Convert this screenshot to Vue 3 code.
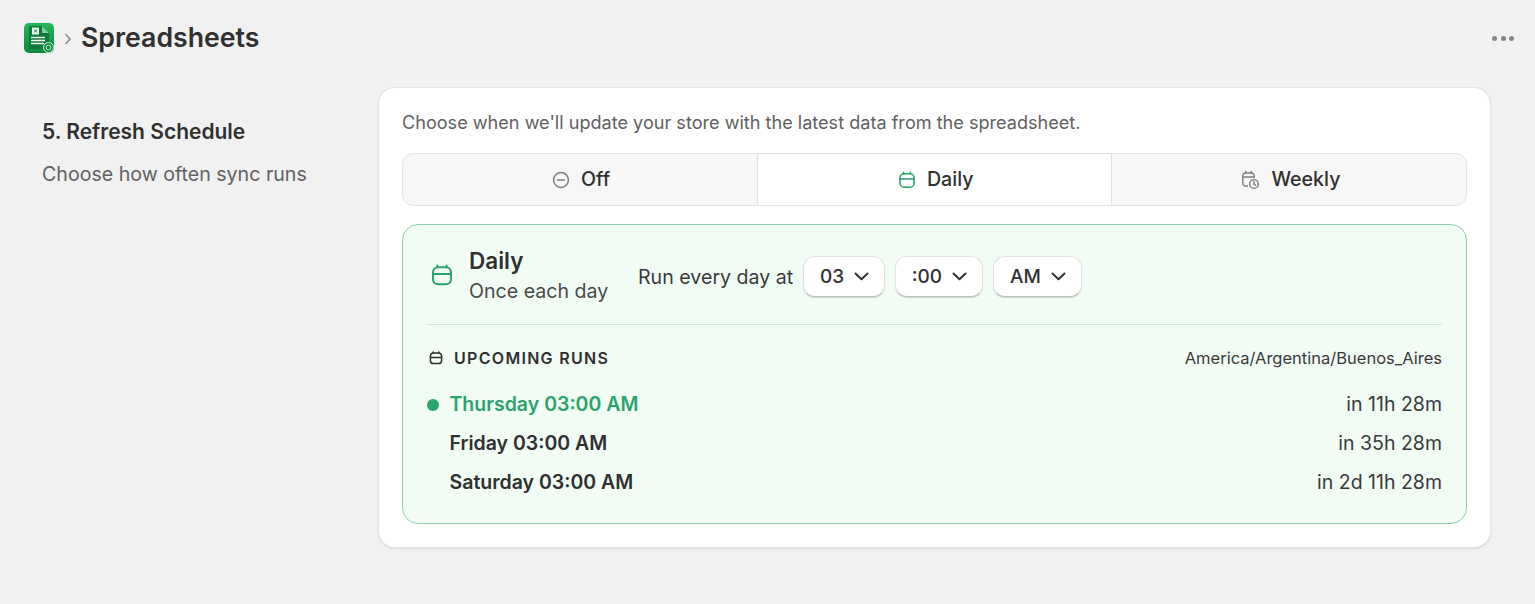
<script setup>
const selects = [
  { label: '03', cls: 's1' },
  { label: ':00', cls: 's2' },
  { label: 'AM', cls: 's3' }
]
const runs = [
  { day: 'Thursday 03:00 AM', left: 'in 11h 28m', next: true },
  { day: 'Friday 03:00 AM', left: 'in 35h 28m', next: false },
  { day: 'Saturday 03:00 AM', left: 'in 2d 11h 28m', next: false }
]
</script>

<template>
  <div class="page">
    <header class="top">
      <svg class="logo" viewBox="0 0 30 30" width="30" height="30">
        <defs>
          <linearGradient id="lg" x1="0" y1="0" x2="0" y2="1">
            <stop offset="0" stop-color="#27b45c"/>
            <stop offset="1" stop-color="#0d8a3e"/>
          </linearGradient>
        </defs>
        <rect width="30" height="30" rx="5" fill="url(#lg)"/>
        <path d="M5 3H18L25 10V26H5Z" fill="#0c7a38"/>
        <path d="M18 3L25 10H18Z" fill="#6fd796"/>
        <rect x="8" y="4.5" width="7" height="7" fill="#eafff1"/>
        <path d="M10 6.5L13 9.5M13 6.5L10 9.5" stroke="#0c7a38" stroke-width="1"/>
        <path d="M7 14.5H21M7 17.5H21M7 20.5H20" stroke="#eafff1" stroke-width="1.5"/>
        <circle cx="24.5" cy="24.5" r="5" fill="#0f8a3c" stroke="#cdeeda" stroke-width="1"/>
        <circle cx="24.5" cy="24.5" r="2.4" fill="none" stroke="#cdeeda" stroke-width="1"/>
      </svg>
      <svg class="crumb" viewBox="0 0 8 14" width="8" height="14">
        <path d="M1.5 2L6 7L1.5 12" fill="none" stroke="#8a8a8a" stroke-width="1.5"/>
      </svg>
      <h1 class="title">Spreadsheets</h1>
      <div class="dots"><i></i><i></i><i></i></div>
    </header>

    <main class="body">
      <aside class="side">
        <h2 class="side-title">5. Refresh Schedule</h2>
        <p class="side-text">Choose how often sync runs</p>
      </aside>

      <section class="card">
        <p class="intro">Choose when we'll update your store with the latest data from the spreadsheet.</p>

        <div class="tabs">
          <div class="tab">
            <svg viewBox="0 0 18 18" width="18" height="18" fill="none" stroke="#7d7d7d" stroke-width="1.5">
              <circle cx="9" cy="9" r="7.4"/>
              <path d="M5.6 9H12.4" stroke-linecap="round"/>
            </svg>
            <span>Off</span>
          </div>
          <div class="tab active">
            <svg viewBox="0 0 18 18" width="18" height="18" fill="none" stroke="#2ba36c" stroke-width="1.6">
              <rect x="2" y="2.8" width="14" height="13.4" rx="4"/>
              <path d="M2 8H16M5.6 1.2V2.8M12.4 1.2V2.8" stroke-linecap="round"/>
            </svg>
            <span>Daily</span>
          </div>
          <div class="tab">
            <svg viewBox="0 0 20 20" width="20" height="20" fill="none" stroke="#7d7d7d" stroke-width="1.4">
              <path d="M8 16H5.5A2.7 2.7 0 0 1 2.8 13.3V5.7A2.7 2.7 0 0 1 5.5 3H11.5A2.7 2.7 0 0 1 14.2 5.7V8" />
              <path d="M2.8 7H14.2M5.8 1.5V3M11.2 1.5V3" stroke-linecap="round"/>
              <circle cx="14" cy="14" r="4.4"/>
              <path d="M14 11.8V14.2L15.6 15.1" stroke-linecap="round"/>
            </svg>
            <span>Weekly</span>
          </div>
        </div>

        <div class="panel">
          <div class="head">
            <svg class="head-icon" viewBox="0 0 22 22" width="22" height="22" fill="none" stroke="#2ba36c" stroke-width="2">
              <rect x="2" y="3.2" width="18" height="17" rx="5"/>
              <path d="M2 10H20M6.4 1.4V3.2M15.6 1.4V3.2" stroke-linecap="round"/>
            </svg>
            <div class="head-text">
              <div class="head-title">Daily</div>
              <div class="head-sub">Once each day</div>
            </div>
            <div class="picker">
              <span class="picker-label">Run every day at</span>
              <button v-for="s in selects" :key="s.label" class="select" :class="s.cls">
                <span>{{ s.label }}</span>
                <svg viewBox="0 0 15 9" width="15" height="9" fill="none" stroke="#303030" stroke-width="2">
                  <path d="M1.5 1.5L7.5 7.2L13.5 1.5" stroke-linecap="round" stroke-linejoin="round"/>
                </svg>
              </button>
            </div>
          </div>

          <div class="upcoming">
            <div class="up-title">
              <svg viewBox="0 0 14 14" width="14" height="14" fill="none" stroke="#303030" stroke-width="1.5">
                <rect x="1.4" y="2" width="11.2" height="10.6" rx="3.2"/>
                <path d="M1.4 6.4H12.6M4.2 1V2M9.8 1V2" stroke-linecap="round"/>
              </svg>
              <span>UPCOMING RUNS</span>
            </div>
            <span class="tz">America/Argentina/Buenos_Aires</span>
          </div>

          <ul class="runs">
            <li v-for="r in runs" :key="r.day" class="run" :class="{ next: r.next }">
              <span class="dot"></span>
              <span class="day">{{ r.day }}</span>
              <span class="left">{{ r.left }}</span>
            </li>
          </ul>
        </div>
      </section>
    </main>
  </div>
</template>

<style>
html, body { margin: 0; background: #f1f1f1; }
</style>

<style scoped>
.page {
  width: 1535px;
  height: 604px;
  background: #f1f1f1;
  font-family: Inter, "Liberation Sans", sans-serif;
  color: #303030;
  box-sizing: border-box;
  overflow: hidden;
}
.top {
  display: flex;
  align-items: center;
  height: 76px;
  padding: 0 21px 0 24px;
}
.logo { flex: none; }
.crumb { margin-left: 10px; margin-top: 2px; flex: none; }
.title {
  margin: -2px 0 0 9px;
  font-size: 26.7px;
  line-height: 36px;
  font-weight: 600;
  color: #303030;
}
.dots { margin-left: auto; display: flex; gap: 3.5px; }
.dots i { width: 5px; height: 5px; border-radius: 50%; background: #858585; display: block; }

.body {
  display: flex;
  align-items: flex-start;
  padding: 12px 45px 0 42px;
}
.side { width: 337px; flex: none; padding-top: 31px; }
.side-title { margin: 0; font-size: 21px; line-height: 26px; font-weight: 600; color: #303030; }
.side-text { margin: 16px 0 0; font-size: 19.6px; line-height: 26px; color: #616161; }

.card {
  flex: 1;
  box-sizing: border-box;
  height: 459px;
  background: #fff;
  border-radius: 16px;
  padding: 22px 23px 23px;
  box-shadow: 0 0 0 1px #e3e3e3, 0 1px 3px rgba(0,0,0,.2);
}
.intro { margin: 0; font-size: 18.1px; line-height: 24px; color: #616161; }
.tabs {
  display: flex;
  height: 53px;
  margin-top: 19px;
  border: 1px solid #e3e3e3;
  border-radius: 11px;
  box-sizing: border-box;
  overflow: hidden;
  background: #f7f7f7;
}
.tab {
  flex: 1;
  display: flex;
  align-items: center;
  justify-content: center;
  gap: 11px;
  padding-left: 2.5px;
  font-size: 19.6px;
  font-weight: 450;
  color: #303030;
}
.tab span { margin-top: -2px; }
.tab + .tab { border-left: 1px solid #e3e3e3; }
.tab.active { background: #fff; }
.tab.active span { font-weight: 500; }

.panel {
  box-sizing: border-box;
  height: 300px;
  margin-top: 18px;
  padding: 0 24px;
  border: 1px solid #93cdb0;
  border-radius: 16px;
  background: #f1fcf5;
}
.head {
  display: flex;
  align-items: center;
  box-sizing: border-box;
  height: 100px;
  padding-top: 4px;
  border-bottom: 1px solid #cfe6d9;
}
.head-icon { margin-left: 4px; margin-top: -3px; flex: none; }
.head-text { margin-left: 16px; margin-top: -1px; width: 139px; white-space: nowrap; }
.head-title { font-size: 22.5px; line-height: 30px; font-weight: 600; color: #303030; }
.head-sub { font-size: 19.6px; line-height: 30px; color: #4a4a4a; }
.picker { display: flex; align-items: center; margin-left: 30px; gap: 10px; }
.picker-label { width: 155px; white-space: nowrap; font-size: 19.6px; color: #3a3a3a; }
.select {
  display: flex;
  align-items: center;
  justify-content: center;
  gap: 10px;
  height: 41px;
  box-sizing: border-box;
  padding: 0 0 0 1px;
  border: 1px solid #e3e3e3;
  border-bottom: 1px solid #bdbdbd;
  border-radius: 12px;
  background: #fff;
  box-shadow: 0 1px 1px rgba(0,0,0,.14);
  font-family: inherit;
  font-size: 19px;
  font-weight: 450;
  color: #303030;
}
.s1 { width: 82px; }
.s2 { width: 88px; }
.s3 { width: 89px; }

.upcoming {
  display: flex;
  align-items: center;
  justify-content: space-between;
  margin-top: 20px;
  height: 26px;
}
.up-title {
  display: flex;
  align-items: center;
  gap: 11px;
  margin-left: 2px;
  font-size: 16px;
  font-weight: 600;
  letter-spacing: 1.3px;
  color: #303030;
}
.tz { font-size: 16.5px; color: #3a3a3a; }
.runs { list-style: none; margin: 14px 0 0; padding: 0; }
.run {
  display: flex;
  align-items: center;
  height: 39px;
  font-size: 19.5px;
}
.day, .left { margin-top: -2px; }
.dot { width: 12px; height: 12px; border-radius: 50%; margin-right: 11px; flex: none; }
.day { font-weight: 600; color: #303030; margin-left: -0.5px; }
.left { margin-left: auto; color: #3a3a3a; }
.next .dot { background: #2ba36c; }
.next .day { color: #2ba36c; }
</style>
